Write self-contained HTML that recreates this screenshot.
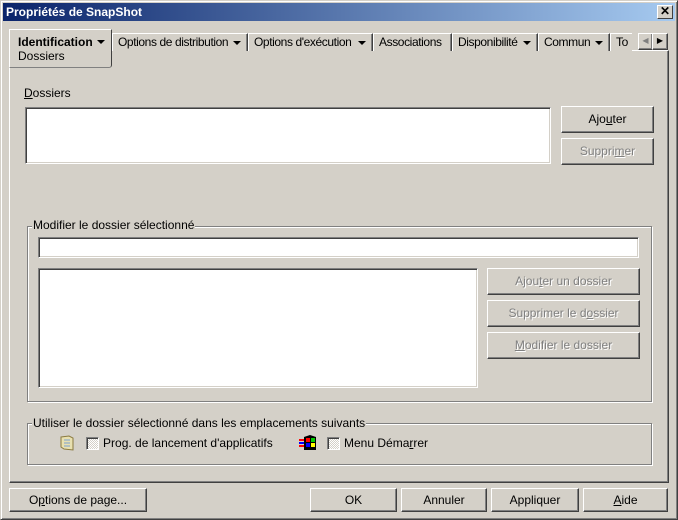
<!DOCTYPE html>
<html><head><meta charset="utf-8"><style>
*{box-sizing:border-box;margin:0;padding:0}
body{width:678px;height:520px;background:#d4d0c8;font-family:"Liberation Sans",sans-serif;font-size:12px;color:#000;position:relative;overflow:hidden}
.a{position:absolute}
.win{left:0;top:0;width:678px;height:520px;border-top:1px solid #d4d0c8;border-left:1px solid #d4d0c8;border-right:1px solid #404040;border-bottom:1px solid #404040;box-shadow:inset 1px 1px #fff,inset -1px -1px #808080}
.title{left:3px;top:3px;width:672px;height:18px;background:linear-gradient(to right,#0a246a,#a6caf0);color:#fff;font-weight:bold;font-size:12px;line-height:18px;padding-left:3px}
.close{left:657px;top:5px;width:16px;height:14px;background:#d4d0c8;border-top:1px solid #fff;border-left:1px solid #fff;border-right:1px solid #404040;border-bottom:1px solid #404040;font-size:12px;line-height:11px;text-align:center;font-weight:bold;color:#000}
.panel{left:9px;top:50px;width:660px;height:433px;border-top:1px solid #fff;border-left:1px solid #fff;border-right:1px solid #404040;border-bottom:1px solid #404040;box-shadow:inset -1px -1px #808080}
.tab{top:33px;height:18px;border-top:1px solid #fff;border-left:1px solid #fff;border-right:1px solid #404040;box-shadow:inset -1px 0 #808080;line-height:16px;padding-left:5px;white-space:nowrap;overflow:hidden;background:#d4d0c8;letter-spacing:-0.4px}
.tri{position:absolute;right:6px;top:7px;width:0;height:0;border-left:4px solid transparent;border-right:4px solid transparent;border-top:4px solid #000}
.sel{left:9px;top:29px;width:103px;height:39px;border-top:1px solid #fff;border-left:1px solid #fff;border-right:1px solid #404040;border-bottom:1px solid #808080;border-radius:0 0 3px 0;background:#d4d0c8;padding-left:8px;line-height:14px;padding-top:5px;z-index:2}
.box{background:#fff;border-top:1px solid #808080;border-left:1px solid #808080;border-right:1px solid #fff;border-bottom:1px solid #fff;box-shadow:inset 1px 1px #404040,inset -1px -1px #d4d0c8}
.btn{border-top:1px solid #fff;border-left:1px solid #fff;border-right:1px solid #404040;border-bottom:1px solid #404040;box-shadow:inset -1px -1px #808080;text-align:center;line-height:23px;background:#d4d0c8}
.dis{color:#808080;text-shadow:1px 1px #fff}
.grp{border:1px solid #808080;box-shadow:1px 1px #fff,inset 1px 1px #fff}
.lbl{background:#d4d0c8;padding:0 1px;line-height:13px}
.chk{width:13px;height:13px;border-top:1px solid #808080;border-left:1px solid #808080;border-right:1px solid #fff;border-bottom:1px solid #fff;box-shadow:inset 1px 1px #404040;background:repeating-conic-gradient(#d4d0c8 0 25%,#fff 0 50%) 0 0/2px 2px}
u{text-decoration:underline}
</style></head><body>
<div class="a win"></div>
<div class="a title">Propriétés de SnapShot</div>
<div class="a close">✕</div>
<div class="a panel"></div>
<div class="a tab" style="left:112px;width:136px">Options de distribution<span class="tri"></span></div>
<div class="a tab" style="left:248px;width:125px">Options d'exécution<span class="tri"></span></div>
<div class="a tab" style="left:373px;width:79px">Associations</div>
<div class="a tab" style="left:452px;width:86px">Disponibilité<span class="tri"></span></div>
<div class="a tab" style="left:538px;width:72px">Commun<span class="tri"></span></div>
<div class="a tab" style="left:610px;width:22px;border-right:none;box-shadow:none">To</div>
<div class="a btn" style="left:638px;top:33px;width:15px;height:17px;line-height:14px;font-size:8px;color:#808080">◀</div>
<div class="a btn" style="left:652px;top:33px;width:16px;height:17px;line-height:14px;font-size:8px">▶</div>
<div class="a sel"><b>Identification</b><span class="tri" style="right:6px;top:10px"></span><br>Dossiers</div>

<div class="a" style="left:24px;top:86px"><u>D</u>ossiers</div>
<div class="a box" style="left:25px;top:107px;width:526px;height:57px"></div>
<div class="a btn" style="left:561px;top:106px;width:93px;height:27px;line-height:25px">Ajo<u>u</u>ter</div>
<div class="a btn dis" style="left:561px;top:138px;width:93px;height:27px;line-height:25px">Suppri<u>m</u>er</div>

<div class="a grp" style="left:27px;top:226px;width:625px;height:176px"></div>
<div class="a lbl" style="left:32px;top:219px">Modifier le dossier sélectionné</div>
<div class="a box" style="left:38px;top:237px;width:601px;height:21px"></div>
<div class="a box" style="left:38px;top:268px;width:440px;height:120px"></div>
<div class="a btn dis" style="left:487px;top:268px;width:153px;height:27px;line-height:25px">Ajou<u>t</u>er un dossier</div>
<div class="a btn dis" style="left:487px;top:300px;width:153px;height:27px;line-height:25px">Supprimer le d<u>o</u>ssier</div>
<div class="a btn dis" style="left:487px;top:332px;width:153px;height:27px;line-height:25px"><u>M</u>odifier le dossier</div>

<div class="a grp" style="left:27px;top:423px;width:625px;height:42px"></div>
<div class="a lbl" style="left:32px;top:417px">Utiliser le dossier sélectionné dans les emplacements suivants</div>
<svg class="a" style="left:60px;top:435px" width="14" height="16"><path d="M1 2 L9 1 L13 3 L13 15 L4 14 L1 12Z" fill="#e8e0b0" stroke="#8a7a40"/><path d="M4 5 H10 M4 8 H10 M4 11 H10" stroke="#7aa0d0"/></svg>
<div class="a chk" style="left:86px;top:437px"></div>
<div class="a" style="left:103px;top:436px">Pro<u>g</u>. de lancement d'applicatifs</div>
<svg class="a" style="left:299px;top:434px" width="18" height="17"><rect x="0" y="5" width="5" height="2" fill="#f00"/><rect x="0" y="8" width="5" height="2" fill="#00f"/><rect x="0" y="11" width="5" height="2" fill="#f00"/><path d="M5 3 L11 1 L17 3 L17 16 L5 16Z" fill="#000"/><rect x="7" y="4" width="4" height="4" fill="#f00"/><rect x="12" y="4" width="4" height="4" fill="#0c0"/><rect x="7" y="9" width="4" height="4" fill="#00f"/><rect x="12" y="9" width="4" height="4" fill="#ff0"/></svg>
<div class="a chk" style="left:327px;top:437px"></div>
<div class="a" style="left:344px;top:436px">Menu Déma<u>r</u>rer</div>

<div class="a btn" style="left:9px;top:488px;width:138px;height:24px">O<u>p</u>tions de page...</div>
<div class="a btn" style="left:310px;top:488px;width:87px;height:24px">OK</div>
<div class="a btn" style="left:401px;top:488px;width:86px;height:24px">Annuler</div>
<div class="a btn" style="left:491px;top:488px;width:88px;height:24px">Appliquer</div>
<div class="a btn" style="left:583px;top:488px;width:85px;height:24px"><u>A</u>ide</div>
</body></html>
